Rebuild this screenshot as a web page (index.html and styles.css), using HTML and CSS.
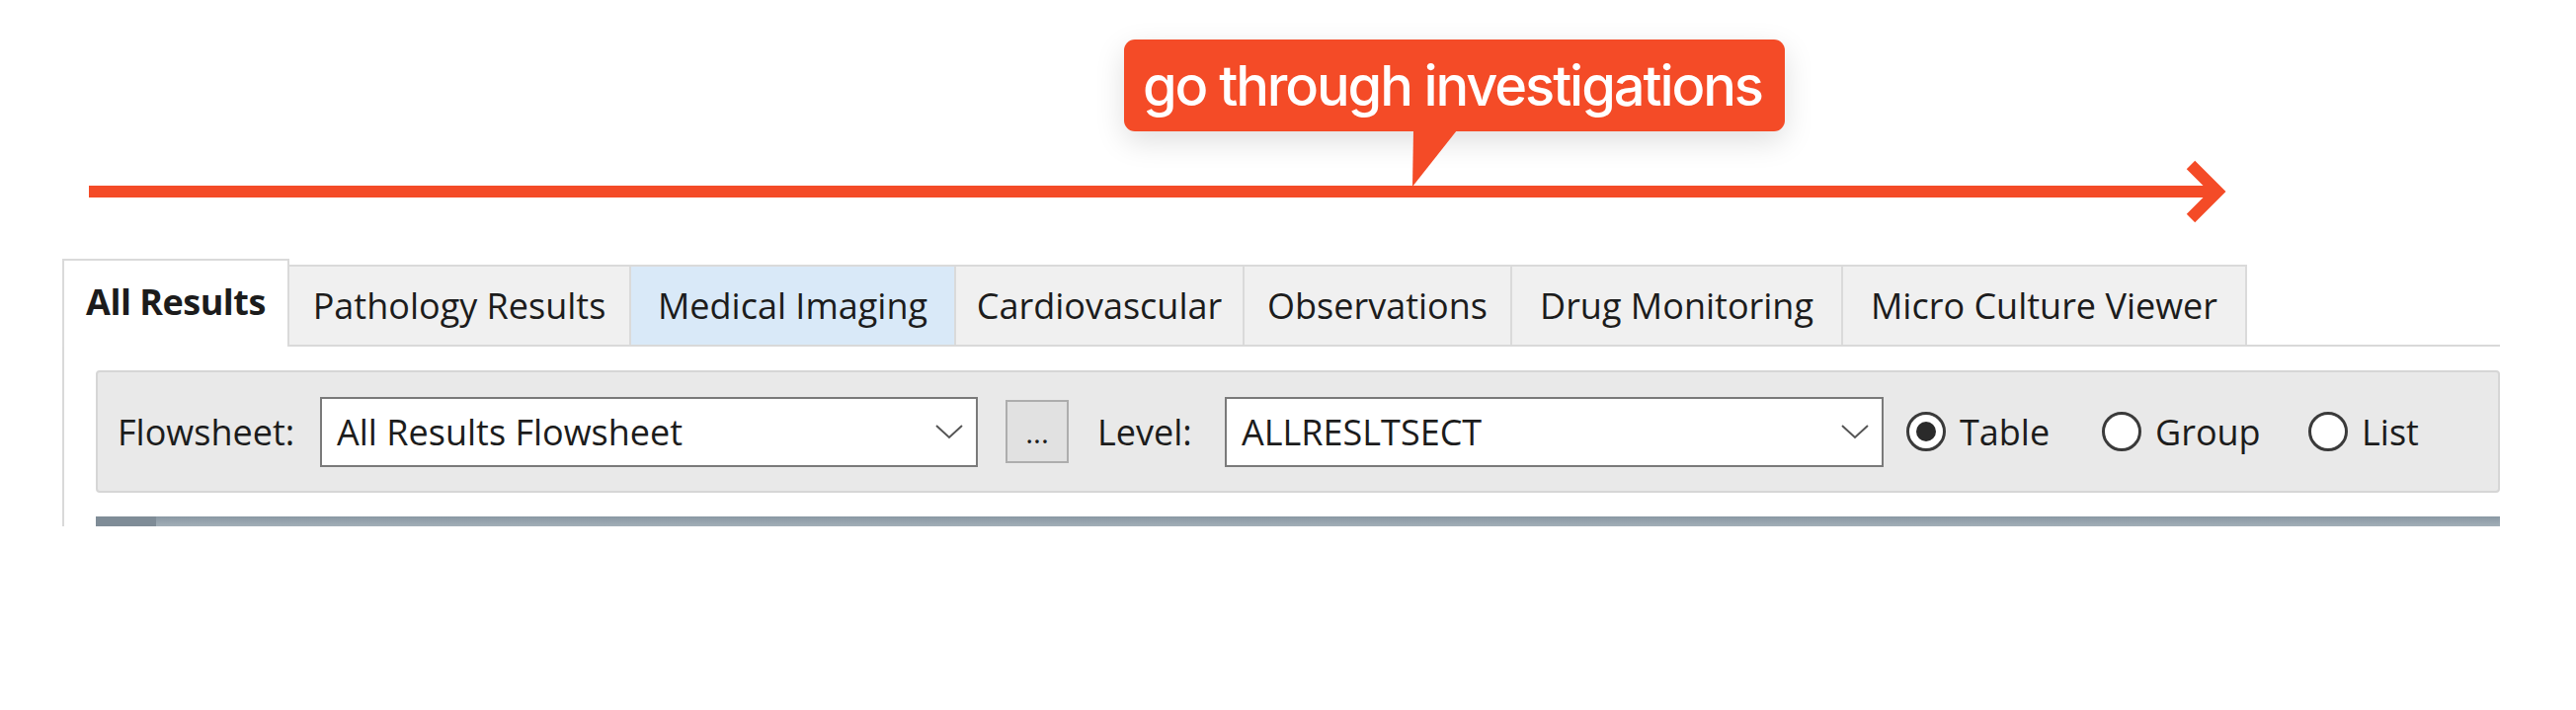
FILE: index.html
```html
<!DOCTYPE html>
<html lang="en">
<head>
<meta charset="utf-8">
<title>Results Viewer</title>
<link rel="stylesheet" href="styles.css">
</head>
<body>
<div class="annot">
  <div class="callout">
    <span class="callout-text">go through investigations</span>
    <svg class="callout-tail" width="50" height="58" viewBox="0 0 50 58"><polygon points="3,0 47,0 2,57" fill="#f44b27"/></svg>
  </div>
  <svg class="arrow" width="2608" height="80" viewBox="0 0 2608 80">
    <line x1="90" y1="39" x2="2244" y2="39" stroke="#f44b27" stroke-width="12"/>
    <polyline points="2218,12 2245,39 2218,66" fill="none" stroke="#f44b27" stroke-width="12" stroke-linejoin="miter"/>
  </svg>
</div>
<div class="app">
  <div class="tabs">
    <div class="tab active t-all">All Results</div>
    <div class="tab t-path">Pathology Results</div>
    <div class="tab hover t-med">Medical Imaging</div>
    <div class="tab t-cardio">Cardiovascular</div>
    <div class="tab t-obs">Observations</div>
    <div class="tab t-drug">Drug Monitoring</div>
    <div class="tab last t-micro">Micro Culture Viewer</div>
  </div>
  <div class="panel">
    <div class="toolbar">
      <span class="lbl lbl-flow">Flowsheet:</span>
      <div class="combo combo-flow">
        <span class="combo-text">All Results Flowsheet</span>
        <svg class="chev" width="28" height="16" viewBox="0 0 28 16"><polyline points="1,2 14,14 27,2" fill="none" stroke="#555" stroke-width="2"/></svg>
      </div>
      <div class="btn-more">...</div>
      <span class="lbl lbl-level">Level:</span>
      <div class="combo combo-level">
        <span class="combo-text">ALLRESLTSECT</span>
        <svg class="chev" width="28" height="16" viewBox="0 0 28 16"><polyline points="1,2 14,14 27,2" fill="none" stroke="#555" stroke-width="2"/></svg>
      </div>
      <div class="radios">
        <div class="radio r-table"><span class="circle checked"></span><span class="rtext">Table</span></div>
        <div class="radio r-group"><span class="circle"></span><span class="rtext">Group</span></div>
        <div class="radio r-list"><span class="circle"></span><span class="rtext">List</span></div>
      </div>
    </div>
    <div class="bar"></div>
  </div>
</div>
</body>
</html>
```
FILE: styles.css
```css
* { box-sizing: border-box; }
html, body { margin: 0; padding: 0; background: #ffffff; }
body { width: 2608px; font-family: "Open Sans", "Noto Sans", sans-serif; color: #1c1c1c; }

.annot { height: 262px; padding-top: 40px; }
.callout {
  position: relative;
  margin-left: 1138px;
  width: 669px;
  height: 93px;
  background: #f44b27;
  border-radius: 11px;
  box-shadow: 0 10px 30px rgba(0,0,0,0.13);
  display: flex;
  align-items: center;
  padding-left: 19px;
}
.callout-text {
  font-family: "Inter", "Roboto", sans-serif;
  font-weight: 500;
  font-size: 56px;
  letter-spacing: -2.1px;
  color: #ffffff;
  white-space: nowrap;
}
.callout-tail { position: absolute; left: 290px; top: 92px; }
.arrow { display: block; margin-top: 22px; }

.tabs { display: flex; align-items: flex-end; height: 87px; margin-left: 63px; }
.tab {
  height: 81px;
  display: flex;
  align-items: center;
  justify-content: center;
  background: #f0f0f0;
  border-top: 2px solid #dadada;
  border-left: 2px solid #dadada;
  font-size: 36px;
  white-space: nowrap;
}
.tab.active {
  position: relative;
  z-index: 1;
  height: 89px;
  margin-bottom: -2px;
  background: #ffffff;
  border-right: 2px solid #dadada;
  font-weight: 700;
  letter-spacing: -0.5px;
  padding-bottom: 4px;
}
.tab.active + .tab { border-left: none; }
.tab.hover { background: #d9e9f8; }
.tab.last { border-right: 2px solid #dadada; }
.t-all { width: 230px; }
.t-path { width: 344px; }
.t-med { width: 329px; }
.t-cardio { width: 292px; }
.t-obs { width: 271px; }
.t-drug { width: 335px; }
.t-micro { width: 411px; }

.panel {
  margin-left: 63px;
  width: 2468px;
  border-left: 2px solid #d9d9d9;
  border-top: 2px solid #d9d9d9;
  padding: 24px 0 0 32px;
}
.toolbar {
  height: 124px;
  background: #e9e9e9;
  border: 2px solid #d6d6d6;
  border-radius: 4px;
  display: flex;
  align-items: center;
  font-size: 36px;
}
.lbl { white-space: nowrap; }
.lbl-flow { margin-left: 20px; width: 205px; }
.lbl-level { margin-left: 29px; width: 129px; }
.combo {
  height: 71px;
  background: #ffffff;
  border: 2px solid #7a7a7a;
  display: flex;
  align-items: center;
  justify-content: space-between;
  padding: 0 13px 0 15px;
  white-space: nowrap;
}
.combo-flow { width: 666px; }
.combo-level { width: 667px; }
.chev { display: block; }
.btn-more {
  margin-left: 28px;
  width: 64px;
  height: 64px;
  background: #e1e1e1;
  border: 2px solid #adadad;
  display: flex;
  align-items: flex-end;
  justify-content: center;
  font-size: 30px;
  line-height: 1;
  padding-bottom: 14px;
}
.radios { margin-left: 23px; display: flex; align-items: center; }
.radio { display: flex; align-items: center; gap: 14px; }
.r-table { width: 198px; }
.r-group { width: 209px; }
.circle {
  width: 40px;
  height: 40px;
  border-radius: 50%;
  border: 3px solid #3a3a3a;
  background: #ffffff;
  display: flex;
  align-items: center;
  justify-content: center;
}
.circle.checked::after {
  content: "";
  width: 20px;
  height: 20px;
  border-radius: 50%;
  background: #2a2a2a;
}
.bar {
  margin-top: 24px;
  height: 10px;
  background: linear-gradient(to right, #7f8c97 0 61px, rgba(0,0,0,0) 61px), linear-gradient(#8a98a3, #a3afb8);
}
```
